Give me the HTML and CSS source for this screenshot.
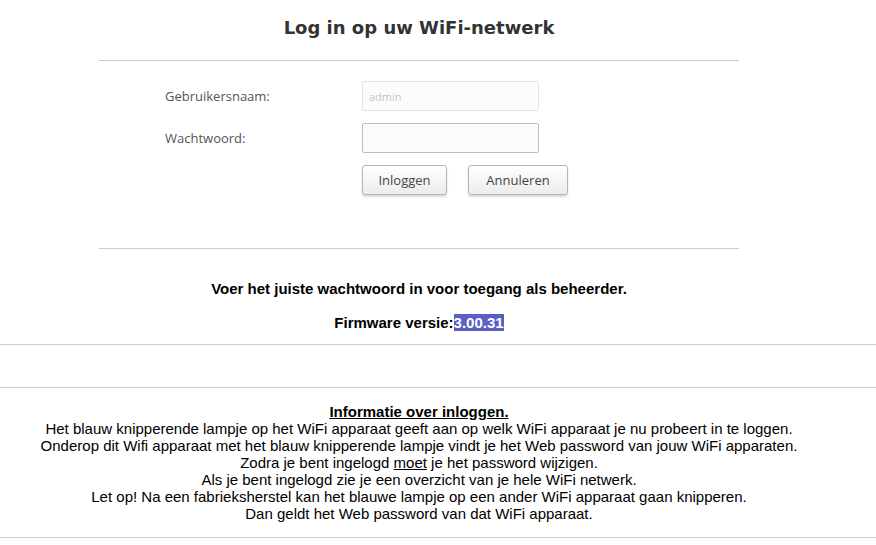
FILE: index.html
```html
<!DOCTYPE html>
<html lang="nl">
<head>
<meta charset="utf-8">
<title>Log in op uw WiFi-netwerk</title>
<link rel="stylesheet" href="styles.css">
</head>
<body>
<div class="page">
  <h1 class="title">Log in op uw WiFi-netwerk</h1>
  <div class="panel">
    <div class="form">
      <label class="label" for="user">Gebruikersnaam:</label>
      <input class="field field-disabled" id="user" type="text" placeholder="admin">
      <label class="label" for="pass">Wachtwoord:</label>
      <input class="field" id="pass" type="password">
      <div class="buttons">
        <button class="btn btn-login" type="button">Inloggen</button>
        <button class="btn btn-cancel" type="button">Annuleren</button>
      </div>
    </div>
  </div>
  <p class="notice">Voer het juiste wachtwoord in voor toegang als beheerder.</p>
  <p class="firmware">Firmware versie:<span class="version">3.00.31</span></p>
</div>
<hr class="rule">
<div class="spacer"></div>
<hr class="rule">
<div class="page info">
  <div class="info-title">Informatie over inloggen.</div>
  <div>Het blauw knipperende lampje op het WiFi apparaat geeft aan op welk WiFi apparaat je nu probeert in te loggen.</div>
  <div>Onderop dit Wifi apparaat met het blauw knipperende lampje vindt je het Web password van jouw WiFi apparaten.</div>
  <div>Zodra je bent ingelogd <u>moet</u> je het password wijzigen.</div>
  <div>Als je bent ingelogd zie je een overzicht van je hele WiFi netwerk.</div>
  <div>Let op! Na een fabrieksherstel kan het blauwe lampje op een ander WiFi apparaat gaan knipperen.</div>
  <div>Dan geldt het Web password van dat WiFi apparaat.</div>
</div>
<hr class="rule">
</body>
</html>
```

FILE: styles.css
```css
html, body {
  margin: 0;
  padding: 0;
  background: #ffffff;
}
body {
  font-family: "Liberation Sans", Arial, sans-serif;
  color: #000;
}
.page {
  width: 838px;
}
.title {
  margin: 16px 0 0;
  font-family: "DejaVu Sans", Verdana, sans-serif;
  font-size: 18px;
  line-height: 24px;
  font-weight: bold;
  color: #333333;
  text-align: center;
}
.panel {
  width: 640px;
  margin: 20px auto 0;
  border-top: 1px solid #cccccc;
  border-bottom: 1px solid #cccccc;
  padding: 20px 0 53px;
}
.form {
  display: grid;
  grid-template-columns: 197px 177px 1fr;
  row-gap: 12px;
  padding-left: 66px;
  align-items: center;
}
.label {
  grid-column: 1;
  font-family: "Open Sans", sans-serif;
  font-size: 13px;
  color: #555555;
}
.field {
  grid-column: 2;
  box-sizing: border-box;
  width: 177px;
  height: 30px;
  margin: 0;
  border: 1px solid #bdbdbd;
  border-radius: 2px;
  background: #fbfbfb;
  padding: 0 6px;
  font-family: "Open Sans", sans-serif;
  font-size: 11px;
}
.field-disabled {
  border-color: #e3e3e3;
  background: #fcfcfc;
}
.field::placeholder {
  color: #c4c4c4;
}
.buttons {
  grid-column: 2 / 4;
  display: flex;
  gap: 21px;
}
.btn {
  box-sizing: border-box;
  height: 30px;
  margin: 0;
  border: 1px solid #b5b5b5;
  border-radius: 3px;
  background: linear-gradient(#ffffff, #ececec);
  box-shadow: 0 2px 2px rgba(0, 0, 0, 0.15);
  font-family: "Open Sans", sans-serif;
  font-size: 13px;
  color: #444444;
  padding: 0;
}
.btn-login {
  width: 85px;
}
.btn-cancel {
  width: 100px;
}
.notice {
  margin: 31px 0 0;
  font-size: 15px;
  font-weight: bold;
  line-height: 18px;
  text-align: center;
}
.firmware {
  margin: 16px 0 0;
  font-size: 15px;
  font-weight: bold;
  line-height: 18px;
  text-align: center;
}
.version {
  background: #5a5fc6;
  color: #ffffff;
}
.rule {
  margin: 0;
  border: 0;
  border-top: 1px solid #cccccc;
  height: 0;
}
.page + .rule {
  margin-top: 12px;
}
.spacer {
  height: 42px;
}
.info {
  padding-top: 15px;
  font-size: 15px;
  line-height: 17px;
  text-align: center;
}
.info-title {
  font-weight: bold;
  text-decoration: underline;
}
.page.info + .rule {
  margin-top: 15px;
}
```
